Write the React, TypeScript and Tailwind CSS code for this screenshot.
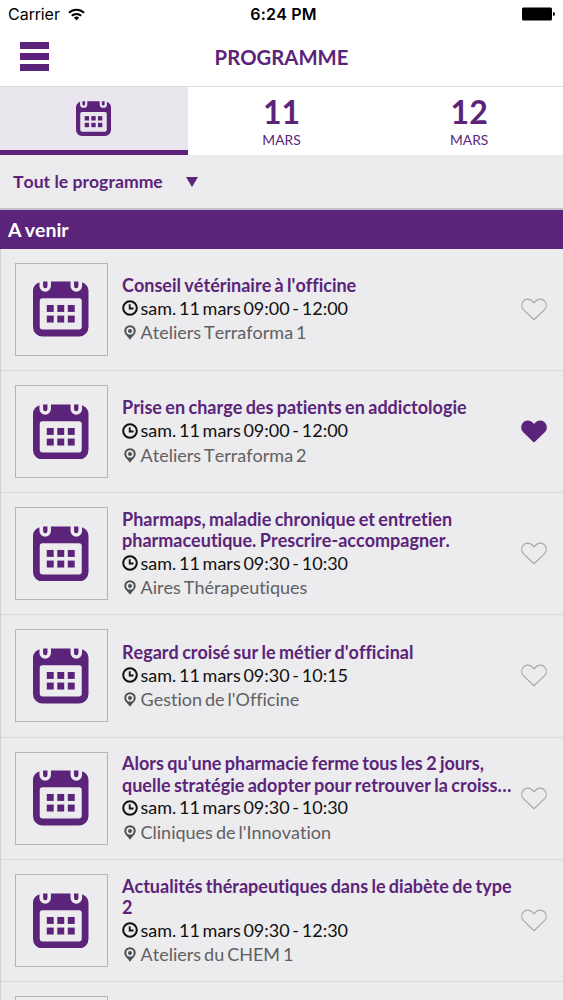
import React from 'react';

interface Session {
    id: number;
    title: string;
    date: string;
    place: string;
    favorite: boolean;
}

const sessions: Session[] = [
    { id: 1, title: "Conseil vétérinaire à l'officine", date: 'sam. 11 mars 09:00 - 12:00', place: 'Ateliers Terraforma 1', favorite: false },
    { id: 2, title: 'Prise en charge des patients en addictologie', date: 'sam. 11 mars 09:00 - 12:00', place: 'Ateliers Terraforma 2', favorite: true },
    { id: 3, title: 'Pharmaps, maladie chronique et entretien pharmaceutique. Prescrire-accompagner.', date: 'sam. 11 mars 09:30 - 10:30', place: 'Aires Thérapeutiques', favorite: false },
    { id: 4, title: "Regard croisé sur le métier d'officinal", date: 'sam. 11 mars 09:30 - 10:15', place: "Gestion de l'Officine", favorite: false },
    { id: 5, title: "Alors qu'une pharmacie ferme tous les 2 jours, quelle stratégie adopter pour retrouver la croiss…", date: 'sam. 11 mars 09:30 - 10:30', place: "Cliniques de l'Innovation", favorite: false },
    { id: 6, title: 'Actualités thérapeutiques dans le diabète de type 2', date: 'sam. 11 mars 09:30 - 12:30', place: 'Ateliers du CHEM 1', favorite: false },
];

const days = [
    { day: '11', month: 'MARS' },
    { day: '12', month: 'MARS' },
];

const CalendarIcon: React.FC<{ className?: string }> = ({ className }) => (
    <svg viewBox="0 0 56 56" className={className} fill="#5b247a">
        <path
            fillRule="evenodd"
            d="M6.5 1.3V5a5.8 5.8 0 0 0 11.6 0V.5h19.8V5a5.8 5.8 0 0 0 11.6 0V1.3C53.5 2.8 56 6 56 10v36.5a9.5 9.5 0 0 1-9.5 9.5h-37A9.5 9.5 0 0 1 0 46.5V10C0 6 2.5 2.8 6.5 1.3ZM9.5 17.5a2.7 2.7 0 0 0-2.7 2.7V46a3 3 0 0 0 3 3h36.4a3 3 0 0 0 3-3V20.2a2.7 2.7 0 0 0-2.7-2.7Z"
        />
        <path d="M10.2.5h4.4V5a2.2 2.2 0 0 1-4.4 0ZM41.4.5h4.4V5a2.2 2.2 0 0 1-4.4 0Z" />
        {[24.2, 34.9].map(y => [13.9, 24.5, 35.1].map(x => (
            <rect key={`${x}-${y}`} x={x} y={y} width="7" height="7" />
        )))}
    </svg>
);

const ClockIcon: React.FC = () => (
    <svg viewBox="0 0 16 16" className="w-4 h-4 shrink-0" fill="none" stroke="#111" strokeWidth="2">
        <circle cx="8" cy="8" r="6.8" />
        <path d="M7.7 4.3v4.200h3.800" strokeWidth="1.8" />
    </svg>
);

const PinIcon: React.FC = () => (
    <svg viewBox="0 0 12 15" className="w-3 h-[15px] shrink-0 mx-0.5" fill="#505053">
        <path fillRule="evenodd" d="M6 .2a5.7 5.7 0 0 1 5.7 5.7C11.7 9.3 7.8 11.5 6 14.8 4.2 11.5.3 9.3.3 5.9A5.7 5.7 0 0 1 6 .2ZM6 2.2a3.7 3.7 0 1 0 0 7.4A3.7 3.7 0 0 0 6 2.2Z" />
        <circle cx="6" cy="5.9" r="2" />
    </svg>
);

const HeartIcon: React.FC<{ filled: boolean }> = ({ filled }) => (
    <svg
        viewBox="0 0 26 23"
        className="w-[26px] h-[23px] shrink-0"
        fill={filled ? '#5b247a' : 'none'}
        stroke={filled ? '#5b247a' : '#a9a8ab'}
        strokeWidth="1.2"
        strokeLinejoin="round"
    >
        <path d="M13 21.7 2.4 11.6C.2 9.2.3 5.6 2.3 3.2 4.7.5 8.7.4 11.2 3L13 4.9 14.8 3c2.5-2.6 6.5-2.5 8.9.2 2 2.400 2.100 6-.1 8.400Z" />
    </svg>
);

const StatusBar: React.FC = () => (
    <div className="h-[28px] grid grid-cols-3 items-center px-2 font-['Inter',sans-serif] text-black [word-spacing:0]">
        <div className="flex items-center gap-2 text-[16px]">
            <span>Carrier</span>
            <svg viewBox="0 0 18 13" className="w-[17px] h-[13px]" fill="none" stroke="#000" strokeWidth="2.2">
                <path d="M1 4.7a11.5 11.5 0 0 1 16 0M4 7.9a7.2 7.2 0 0 1 10 0" />
                <path d="M9 12.6 6.2 9.9a4 4 0 0 1 5.6 0Z" fill="#000" stroke="none" />
            </svg>
        </div>
        <div className="pl-1 text-center text-[16px] tracking-[0.2px] font-semibold">6:24 PM</div>
        <svg viewBox="0 0 33 14" className="w-[33px] h-[14px] justify-self-end">
            <rect x="0" y="0.5" width="30" height="13" rx="1.5" />
            <path d="M31 5a2 2 0 0 1 0 4Z" />
        </svg>
    </div>
);

const SessionRow: React.FC<{ session: Session }> = ({ session }) => (
    <li className="h-[122.25px] flex items-center pl-[14px] pr-4 border-b border-[#d9d8da]">
        <div className="w-[93px] h-[93px] shrink-0 flex items-center justify-center border border-[#b5b4b6]">
            <CalendarIcon className="w-[55.5px] h-[55.5px] mr-px" />
        </div>
        <div className="w-[396px] shrink-0 ml-[14px] pt-[2px]">
            <h3 className="text-[18px] leading-[21.3px] font-bold text-[#5b247a] [word-spacing:-1px]">{session.title}</h3>
            <p className="flex items-center gap-[2.5px] h-6 text-[18px] text-[#111] [word-spacing:-1.9px]">
                <ClockIcon />
                {session.date}
            </p>
            <p className="flex items-center gap-[2.5px] h-[25px] text-[18px] text-[#606063]">
                <PinIcon />
                {session.place}
            </p>
        </div>
        <div className="ml-auto">
            <HeartIcon filled={session.favorite} />
        </div>
    </li>
);

const App: React.FC = () => {
    return (
        <div className="w-[563px] h-[1000px] overflow-hidden bg-[#ecebed] font-['Lato',sans-serif] text-[#5b247a] [word-spacing:-1.6px] [font-kerning:none] [font-variant-ligatures:none]">
            <header className="h-[87px] bg-white border-b border-[#dcdbdd]">
                <StatusBar />
                <div className="h-[58px] grid grid-cols-3 items-center px-5">
                    <button className="w-[29px] -mt-px flex flex-col gap-1" aria-label="Menu">
                        <span className="h-[7px] bg-[#5b247a]" />
                        <span className="h-[7px] bg-[#5b247a]" />
                        <span className="h-[7px] bg-[#5b247a]" />
                    </button>
                    <h1 className="text-center text-[20.3px] font-bold">PROGRAMME</h1>
                </div>
            </header>

            {/* Day tabs */}
            <nav className="h-[68px] grid grid-cols-3 bg-white">
                <button className="flex items-center justify-center bg-[#eae6ed] border-b-[5px] border-[#5b247a]">
                    <CalendarIcon className="w-[35px] h-[35px]" />
                </button>
                {days.map(({ day, month }) => (
                    <button key={day} className="flex flex-col items-center">
                        <span className="mt-[7px] text-[32px] leading-[36px] font-bold">{day}</span>
                        <span className="text-[13.8px] leading-[19px]">{month}</span>
                    </button>
                ))}
            </nav>

            <button className="w-full h-[55px] flex items-center gap-[23px] pl-[13px] pt-px border-b-2 border-[#c5c2c7]">
                <span className="text-[17.6px] font-bold">Tout le programme</span>
                <svg viewBox="0 0 12 10" className="w-3 h-2.5" fill="#5b247a">
                    <path d="M0 0h12L6 10Z" />
                </svg>
            </button>

            <h2 className="h-[38.5px] flex items-center pl-2 bg-[#5b247a] text-white text-[19.5px] font-bold">A venir</h2>

            <ul className="border-l border-[#d3d2d4]">
                {sessions.map(session => (
                    <SessionRow key={session.id} session={session} />
                ))}
                {/* next entry, cut by the bottom of the screen */}
                <li className="pl-[14px] pt-[14px]">
                    <div className="w-[93px] h-[93px] border border-[#b5b4b6]" />
                </li>
            </ul>
        </div>
    );
};

export default App;
